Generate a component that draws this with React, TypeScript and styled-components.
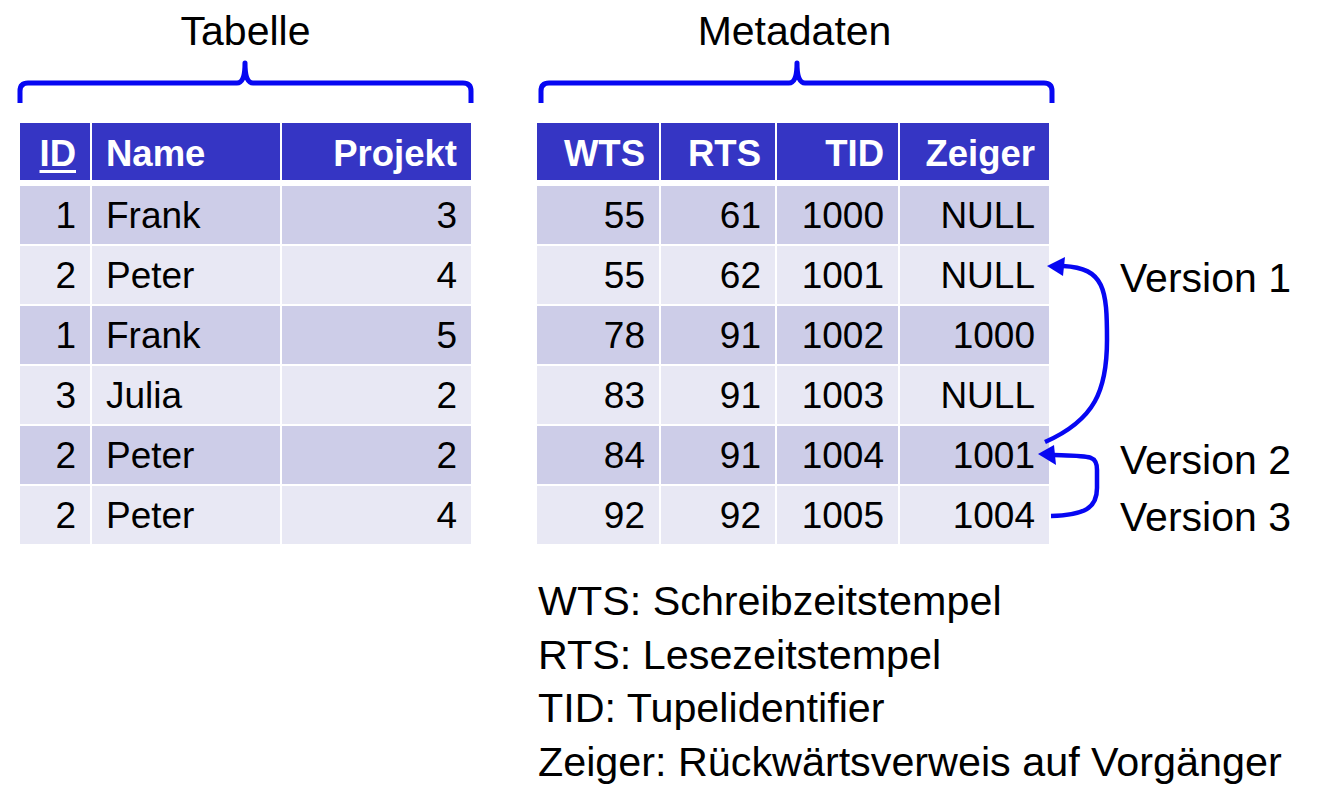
import React from "react";
import styled, { createGlobalStyle } from "styled-components";

const GlobalStyle = createGlobalStyle`
  html, body {
    margin: 0;
    padding: 0;
    background: #ffffff;
  }
  body {
    font-family: "Liberation Sans", Arial, sans-serif;
    color: #000;
  }
`;

const BLUE = "#0707f2";

type Align = "left" | "right";

interface Column {
  label: string;
  width: number;
  align: Align;
  key?: boolean;
}

const mainColumns: Column[] = [
  { label: "ID", width: 70, align: "right", key: true },
  { label: "Name", width: 188, align: "left" },
  { label: "Projekt", width: 189, align: "right" },
];

const mainRows = [
  ["1", "Frank", "3"],
  ["2", "Peter", "4"],
  ["1", "Frank", "5"],
  ["3", "Julia", "2"],
  ["2", "Peter", "2"],
  ["2", "Peter", "4"],
];

const metaColumns: Column[] = [
  { label: "WTS", width: 122, align: "right" },
  { label: "RTS", width: 114, align: "right" },
  { label: "TID", width: 121, align: "right" },
  { label: "Zeiger", width: 149, align: "right" },
];

const metaRows = [
  ["55", "61", "1000", "NULL"],
  ["55", "62", "1001", "NULL"],
  ["78", "91", "1002", "1000"],
  ["83", "91", "1003", "NULL"],
  ["84", "91", "1004", "1001"],
  ["92", "92", "1005", "1004"],
];

const legend = [
  "WTS: Schreibzeitstempel",
  "RTS: Lesezeitstempel",
  "TID: Tupelidentifier",
  "Zeiger: Rückwärtsverweis auf Vorgänger",
];

const DataTable = ({ columns, rows }: { columns: Column[]; rows: string[][] }) => {
  const template = columns.map((c) => `${c.width}px`).join(" ");
  return (
    <Table>
      <HeaderRow $template={template}>
        {columns.map((c) => (
          <HeadCell key={c.label} $align={c.align}>
            {c.key ? <KeyLabel>{c.label}</KeyLabel> : c.label}
          </HeadCell>
        ))}
      </HeaderRow>
      {rows.map((row, i) => (
        <BodyRow key={i} $template={template} $odd={i % 2 === 0}>
          {row.map((value, j) => (
            <Cell key={j} $align={columns[j].align}>
              {value}
            </Cell>
          ))}
        </BodyRow>
      ))}
    </Table>
  );
};

// geschweifte Klammer über der Tabelle
const Brace = ({ width, from, to, tip }: { width: number; from: number; to: number; tip: number }) => (
  <BraceSvg width={width} height={68} viewBox={`0 0 ${width} 68`}>
    <path
      d={`M${from} 48 L${from} 36 Q${from} 28 ${from + 8} 28 L${tip - 8} 28 Q${tip} 28 ${tip} 8 Q${tip} 28 ${tip + 8} 28 L${to - 8} 28 Q${to} 28 ${to} 36 L${to} 48`}
      fill="none"
      stroke={BLUE}
      strokeWidth={5}
      strokeLinejoin="round"
    />
  </BraceSvg>
);

const VersionArrows = () => (
  <ArrowSvg width={90} height={430} viewBox="0 0 90 430">
    <path
      d="M11 319 C61 297, 73 267, 73 217 C73 167, 71 145, 29 143"
      fill="none"
      stroke={BLUE}
      strokeWidth={4.5}
    />
    <polygon points="13,143 31,134 29,153" fill={BLUE} />
    <path
      d="M17 393 C51 392, 63 385, 63 365 L63 347 C63 332, 56 333, 20 332"
      fill="none"
      stroke={BLUE}
      strokeWidth={4.5}
    />
    <polygon points="4,331 20,322 22,342" fill={BLUE} />
  </ArrowSvg>
);

const App = () => {
  return (
    <>
      <GlobalStyle />
      <Page>
        <Group>
          <Heading $width={457}>
            <Title>Tabelle</Title>
            <Brace width={457} from={3} to={454} tip={228} />
          </Heading>
          <DataTable columns={mainColumns} rows={mainRows} />
        </Group>

        <Group>
          <Heading $width={521}>
            <Title>Metadaten</Title>
            <Brace width={521} from={7} to={518} tip={263} />
          </Heading>
          <TableRow>
            <DataTable columns={metaColumns} rows={metaRows} />
            <Annotations>
              <VersionArrows />
              <VersionLabel $gap={132}>Version 1</VersionLabel>
              <VersionLabel $gap={135}>Version 2</VersionLabel>
              <VersionLabel $gap={10}>Version 3</VersionLabel>
            </Annotations>
          </TableRow>
          <Legend>
            {legend.map((line) => (
              <LegendLine key={line}>{line}</LegendLine>
            ))}
          </Legend>
        </Group>
      </Page>
    </>
  );
};

export default App;

const Page = styled.div`
  display: flex;
  align-items: flex-start;
  gap: 60px;
  width: 1322px;
  height: 794px;
  box-sizing: border-box;
  padding: 9px 0 0 17px;
  overflow: hidden;
`;

const Group = styled.div`
  display: flex;
  flex-direction: column;
  align-items: flex-start;
`;

const Heading = styled.div<{ $width: number }>`
  display: flex;
  flex-direction: column;
  align-items: center;
  width: ${(p) => p.$width}px;
  margin-top: -1px;
`;

const Title = styled.div`
  font-size: 41px;
  line-height: 47px;
  white-space: nowrap;
`;

const BraceSvg = styled.svg`
  display: block;
`;

const Table = styled.div`
  display: flex;
  flex-direction: column;
  gap: 2px;
  margin-left: 3px;
`;

const HeaderRow = styled.div<{ $template: string }>`
  display: grid;
  grid-template-columns: ${(p) => p.$template};
  column-gap: 2px;
  height: 57px;
  margin-bottom: 4px;
`;

const HeadCell = styled.div<{ $align: Align }>`
  display: flex;
  align-items: center;
  justify-content: ${(p) => (p.$align === "right" ? "flex-end" : "flex-start")};
  padding: 4px 14px 0;
  background: #3535c4;
  color: #ffffff;
  font-size: 36.5px;
  font-weight: 700;
  white-space: nowrap;
`;

const KeyLabel = styled.span`
  text-decoration: underline;
  text-decoration-thickness: 3px;
  text-underline-offset: 4px;
`;

const BodyRow = styled.div<{ $template: string; $odd: boolean }>`
  display: grid;
  grid-template-columns: ${(p) => p.$template};
  column-gap: 2px;
  height: 58px;
  background: #ffffff;

  & > div {
    background: ${(p) => (p.$odd ? "#cdcde8" : "#e8e8f4")};
  }
`;

const Cell = styled.div<{ $align: Align }>`
  display: flex;
  align-items: center;
  justify-content: ${(p) => (p.$align === "right" ? "flex-end" : "flex-start")};
  padding: 1px 14px 0;
  font-size: 37px;
  white-space: nowrap;
`;

const TableRow = styled.div`
  display: flex;
  align-items: flex-start;
`;

const Annotations = styled.div`
  position: relative;
  display: flex;
  flex-direction: column;
  padding-left: 71px;
`;

const ArrowSvg = styled.svg`
  position: absolute;
  left: -15px;
  top: 0;
  overflow: visible;
`;

const VersionLabel = styled.div<{ $gap: number }>`
  margin-top: ${(p) => p.$gap}px;
  font-size: 41px;
  line-height: 47px;
  white-space: nowrap;
`;

const Legend = styled.div`
  display: flex;
  flex-direction: column;
  margin-top: 31px;
  padding-left: 4px;
`;

const LegendLine = styled.div`
  font-size: 41.3px;
  line-height: 53.7px;
  white-space: nowrap;
`;
